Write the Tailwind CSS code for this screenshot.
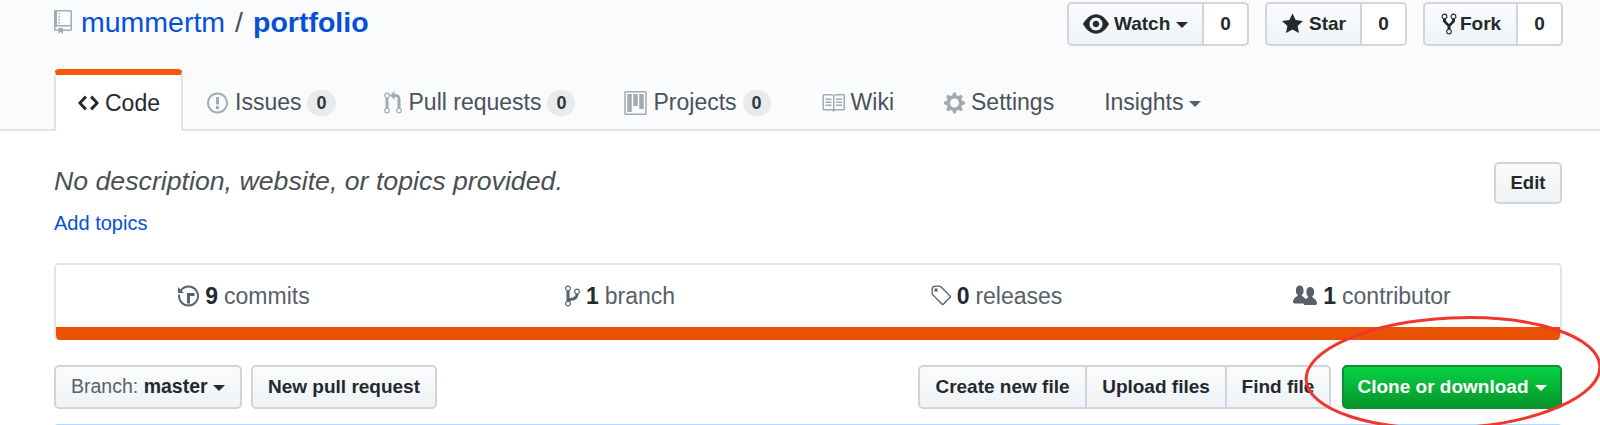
<!DOCTYPE html>
<html lang="en">
<head>
    <meta charset="UTF-8">
    <title>mummertm / portfolio</title>
    <script src="https://cdn.jsdelivr.net/npm/@tailwindcss/browser@4"></script>
</head>
<body class="relative w-[1600px] h-[425px] overflow-hidden bg-white font-['Liberation_Sans',Arial,sans-serif] text-[#24292e]">
    <!-- Repo header -->
    <div class="h-[131px] bg-[#fafbfc] border-b-2 border-[#e1e4e8] pl-[54px] pr-[38px]">
        <div class="flex justify-between h-[69px] items-start">
            <h1 class="flex items-center h-[44px] text-[28.5px] text-[#586069]">
                <svg class="w-[18px] h-[24px] mr-[9px] fill-[#a3aab1]" viewBox="0 0 12 16"><path d="M4 9H3V8h1v1zm0-3H3v1h1V6zm0-2H3v1h1V4zm0-2H3v1h1V2zm8-1v12c0 .55-.45 1-1 1H6v2l-1.5-1.5L3 16v-2H1c-.55 0-1-.45-1-1V1c0-.55.45-1 1-1h10c.55 0 1 .45 1 1zm-1 10H1v2h2v-1h3v1h5v-2zm0-10H2v9h9V1z"/></svg>
                <a class="text-[#0551d6]">mummertm</a>
                <span class="mx-[10px] text-[#4a4f55]">/</span>
                <a class="font-bold text-[#0551d6]">portfolio</a>
            </h1>
            <div class="flex mt-[2px] -mr-px gap-[16px] text-[19px] font-bold">
                <div class="flex h-[44px]">
                    <div class="flex items-center w-[137px] pl-[14px] bg-gradient-to-b from-[#fafbfc] to-[#eff3f6] border-2 border-[#d1d5da] rounded-l-[5px]">
                        <svg class="w-[26px] h-[26px] mr-[5px] fill-[#24292e]" viewBox="0 0 16 16"><path d="M8.06 2C3 2 0 8 0 8s3 6 8.06 6C13 14 16 8 16 8s-3-6-7.94-6zM8 12c-2.2 0-4-1.78-4-4 0-2.2 1.8-4 4-4 2.22 0 4 1.8 4 4 0 2.22-1.78 4-4 4zm2-4c0 1.11-.89 2-2 2-1.11 0-2-.89-2-2 0-1.11.89-2 2-2 1.11 0 2 .89 2 2z"/></svg>
                        Watch
                        <span class="ml-[6px] mt-[2px] border-x-[6px] border-t-[6px] border-x-transparent border-t-[#24292e]"></span>
                    </div>
                    <div class="flex items-center justify-center w-[45px] bg-white border-2 border-l-0 border-[#d1d5da] rounded-r-[5px]">0</div>
                </div>
                <div class="flex h-[44px]">
                    <div class="flex items-center w-[97px] pl-[15px] bg-gradient-to-b from-[#fafbfc] to-[#eff3f6] border-2 border-[#d1d5da] rounded-l-[5px]">
                        <svg class="w-[21px] h-[24px] mr-[6px] fill-[#24292e]" viewBox="0 0 14 16"><path d="M14 6l-4.9-.64L7 1 4.9 5.36 0 6l3.6 3.26L2.67 14 7 11.67 11.33 14l-.93-4.74L14 6z"/></svg>
                        Star
                    </div>
                    <div class="flex items-center justify-center w-[45px] bg-white border-2 border-l-0 border-[#d1d5da] rounded-r-[5px]">0</div>
                </div>
                <div class="flex h-[44px]">
                    <div class="flex items-center w-[95px] pl-[16px] bg-gradient-to-b from-[#fafbfc] to-[#eff3f6] border-2 border-[#d1d5da] rounded-l-[5px]">
                        <svg class="w-[16px] h-[24px] mr-[3px] fill-[#24292e]" viewBox="0 0 10 16"><path d="M8 1a1.993 1.993 0 0 0-1 3.72V6L5 8 3 6V4.72A1.993 1.993 0 0 0 2 1a1.993 1.993 0 0 0-1 3.72V6.5l3 3v1.78A1.993 1.993 0 0 0 5 15a1.993 1.993 0 0 0 1-3.72V9.5l3-3V4.72A1.993 1.993 0 0 0 8 1zM2 4.2C1.34 4.2.8 3.65.8 3c0-.65.55-1.2 1.2-1.2.65 0 1.2.55 1.2 1.2 0 .65-.55 1.2-1.2 1.2zm3 10c-.66 0-1.2-.55-1.2-1.2 0-.65.55-1.2 1.2-1.2.65 0 1.2.55 1.2 1.2 0 .65-.55 1.2-1.2 1.2zm3-10c-.66 0-1.2-.55-1.2-1.2 0-.65.55-1.2 1.2-1.2.65 0 1.2.55 1.2 1.2 0 .65-.55 1.2-1.2 1.2z"/></svg>
                        Fork
                    </div>
                    <div class="flex items-center justify-center w-[45px] bg-white border-2 border-l-0 border-[#d1d5da] rounded-r-[5px]">0</div>
                </div>
            </div>
        </div>
        <!-- Tabs -->
        <nav class="flex h-[62px] text-[23px] text-[#4a525b]">
            <a class="flex items-center h-[62px] w-[129px] pl-[22px] bg-white border-x-2 border-[#e1e4e8] border-t-[6px] border-t-[#f9560d] rounded-t-[5px] text-[#24292e]">
                <svg class="w-[21px] h-[24px] mr-[6px] fill-[#24292e]" viewBox="0 0 14 16"><path d="M9.5 3L8 4.5 11.5 8 8 11.5 9.5 13 14 8 9.5 3zm-5 0L0 8l4.5 5L6 11.5 2.5 8 6 4.5 4.5 3z"/></svg>
                Code
            </a>
            <a class="flex items-center h-[62px] px-[24px] pt-[5px]">
                <svg class="w-[21px] h-[24px] mr-[7px] fill-[#a3aab1]" viewBox="0 0 14 16"><path d="M7 2.3c3.14 0 5.7 2.56 5.7 5.7s-2.56 5.7-5.7 5.7A5.71 5.71 0 0 1 1.3 8c0-3.14 2.56-5.7 5.7-5.7zM7 1C3.14 1 0 4.14 0 8s3.14 7 7 7 7-3.14 7-7-3.14-7-7-7zm1 3H6v5h2V4zm0 6H6v2h2v-2z"/></svg>
                Issues
                <span class="ml-[6px] px-[9px] h-[26px] leading-[26px] rounded-full bg-[#e9eaec] text-[18px] font-bold text-[#2f363d]">0</span>
            </a>
            <a class="flex items-center h-[62px] px-[24px] pt-[5px]">
                <svg class="w-[18px] h-[24px] mr-[7px] fill-[#a3aab1]" viewBox="0 0 12 16"><path d="M11 11.28V5c-.03-.78-.34-1.47-.94-2.06C9.46 2.35 8.78 2.03 8 2H7V0L4 3l3 3V4h1c.27.02.48.11.69.31.21.2.3.42.31.69v6.28A1.993 1.993 0 0 0 10 15a1.993 1.993 0 0 0 1-3.72zm-1 2.92c-.66 0-1.2-.55-1.2-1.2 0-.65.55-1.2 1.2-1.2.65 0 1.2.55 1.2 1.2 0 .65-.55 1.2-1.2 1.2zM4 3c0-1.11-.89-2-2-2a1.993 1.993 0 0 0-1 3.72v6.56A1.993 1.993 0 0 0 2 15a1.993 1.993 0 0 0 1-3.72V4.72c.59-.34 1-.98 1-1.72zm-.8 10c0 .66-.55 1.2-1.2 1.2-.65 0-1.2-.55-1.2-1.2 0-.65.55-1.2 1.2-1.2.65 0 1.2.55 1.2 1.2zM2 4.2C1.34 4.2.8 3.65.8 3c0-.65.55-1.2 1.2-1.2.65 0 1.2.55 1.2 1.2 0 .65-.55 1.2-1.2 1.2z"/></svg>
                Pull requests
                <span class="ml-[6px] px-[9px] h-[26px] leading-[26px] rounded-full bg-[#e9eaec] text-[18px] font-bold text-[#2f363d]">0</span>
            </a>
            <a class="flex items-center h-[62px] px-[25px] pt-[5px]">
                <svg class="w-[23px] h-[24px] mr-[6px] fill-[#a3aab1]" viewBox="0 0 15 16"><path fill-rule="evenodd" d="M10 12h3V2h-3v10zm-4-2h3V2H6v8zm-4 4h3V2H2v12zm-1 1h13V1H1v14zM14 0H1a1 1 0 0 0-1 1v14a1 1 0 0 0 1 1h13a1 1 0 0 0 1-1V1a1 1 0 0 0-1-1z"/></svg>
                Projects
                <span class="ml-[6px] px-[9px] h-[26px] leading-[26px] rounded-full bg-[#e9eaec] text-[18px] font-bold text-[#2f363d]">0</span>
            </a>
            <a class="flex items-center h-[62px] px-[25px] pt-[5px]">
                <svg class="w-[24px] h-[24px] mr-[6px] fill-[#a3aab1]" viewBox="0 0 16 16"><path d="M3 5h4v1H3V5zm0 3h4V7H3v1zm0 2h4V9H3v1zm11-5h-4v1h4V5zm0 2h-4v1h4V7zm0 2h-4v1h4V9zm2-6v9c0 .55-.45 1-1 1H9.5l-1 1-1-1H2c-.55 0-1-.45-1-1V3c0-.55.45-1 1-1h5.5l1 1 1-1H15c.55 0 1 .45 1 1zm-8 .5L7.5 3H2v9h6V3.5zm7-.5H9.5l-.5.5V12h6V3z"/></svg>
                Wiki
            </a>
            <a class="flex items-center h-[62px] px-[25px] pt-[5px]">
                <svg class="w-[21px] h-[24px] mr-[6px] fill-[#a3aab1]" viewBox="0 0 14 16"><path d="M14 8.77v-1.6l-1.94-.64-.45-1.09.88-1.84-1.13-1.13-1.81.91-1.09-.45-.69-1.92h-1.6l-.63 1.94-1.11.45-1.84-.88-1.13 1.13.91 1.81-.45 1.09L0 7.23v1.59l1.94.64.45 1.09-.88 1.84 1.13 1.13 1.81-.91 1.09.45.69 1.92h1.59l.63-1.94 1.11-.45 1.84.88 1.13-1.13-.92-1.81.47-1.09L14 8.75v.02zM7 11c-1.66 0-3-1.34-3-3s1.34-3 3-3 3 1.34 3 3-1.34 3-3 3z"/></svg>
                Settings
            </a>
            <a class="flex items-center h-[62px] px-[25px] pt-[5px]">
                Insights
                <span class="ml-[6px] mt-[2px] border-x-[6px] border-t-[6px] border-x-transparent border-t-[#586069]"></span>
            </a>
        </nav>
    </div>

    <main class="pl-[54px] pr-[38px]">
        <!-- Description -->
        <div class="flex justify-between pt-[31px] h-[132px]">
            <div>
                <p class="text-[26.7px] leading-[38px] italic text-[#4a4f55]">No description, website, or topics provided.</p>
                <a class="block mt-[11px] text-[20px] leading-[24px] text-[#0551d6]">Add topics</a>
            </div>
            <button class="h-[42px] w-[68px] text-[18.5px] font-bold bg-gradient-to-b from-[#fafbfc] to-[#eff3f6] border-2 border-[#d1d5da] rounded-[5px]">Edit</button>
        </div>
        <!-- Summary -->
        <div class="h-[77px] border-2 border-b-0 border-[#e1e4e8] rounded-[5px] overflow-hidden">
            <div class="grid grid-cols-4 h-[62px] text-[23px] text-[#586069]">
                <div class="flex items-center justify-center">
                    <svg class="w-[21px] h-[24px] mr-[6px] fill-[#586069]" viewBox="0 0 14 16"><path d="M8 13H6V6h5v2H8v5zM7 1C4.81 1 2.87 2.02 1.59 3.59L0 2v4h4L2.5 4.5C3.55 3.17 5.17 2.3 7 2.3c3.14 0 5.7 2.56 5.7 5.7s-2.56 5.7-5.7 5.7A5.71 5.71 0 0 1 1.3 8c0-.34.03-.67.09-1H.08C.03 7.33 0 7.66 0 8c0 3.86 3.14 7 7 7s7-3.14 7-7-3.14-7-7-7z"/></svg>
                    <b class="text-[#24292e] mr-[6px]">9</b>commits
                </div>
                <div class="flex items-center justify-center">
                    <svg class="w-[15px] h-[24px] mr-[6px] fill-[#586069]" viewBox="0 0 10 16"><path d="M10 5c0-1.11-.89-2-2-2a1.993 1.993 0 0 0-1 3.72v.3c-.02.52-.23.98-.63 1.38-.4.4-.86.61-1.38.63-.83.02-1.48.16-2 .45V4.72a1.993 1.993 0 0 0-1-3.72C.88 1 0 1.89 0 3a2 2 0 0 0 1 1.72v6.56c-.59.35-1 .99-1 1.72 0 1.11.89 2 2 2 1.11 0 2-.89 2-2 0-.53-.2-1-.53-1.36.09-.06.48-.41.59-.47.25-.11.56-.17.94-.17 1.05-.05 1.95-.45 2.75-1.25S8.95 7.77 9 6.73h-.02C9.59 6.37 10 5.73 10 5zM2 1.8c.66 0 1.2.55 1.2 1.2 0 .65-.55 1.2-1.2 1.2C1.35 4.2.8 3.65.8 3c0-.65.55-1.2 1.2-1.2zm0 12.41c-.66 0-1.2-.55-1.2-1.2 0-.65.55-1.2 1.2-1.2.65 0 1.2.55 1.2 1.2 0 .65-.55 1.2-1.2 1.2zm6-8c-.66 0-1.2-.55-1.2-1.2 0-.65.55-1.2 1.2-1.2.65 0 1.2.55 1.2 1.2 0 .65-.55 1.2-1.2 1.2z"/></svg>
                    <b class="text-[#24292e] mr-[6px]">1</b>branch
                </div>
                <div class="flex items-center justify-center">
                    <svg class="w-[21px] h-[24px] mr-[6px] fill-[#586069]" viewBox="0 0 14 16"><path d="M7.73 1.73C7.26 1.26 6.62 1 5.96 1H3.5C2.13 1 1 2.13 1 3.5v2.47c0 .66.27 1.3.73 1.77l6.06 6.06c.39.39 1.02.39 1.41 0l4.59-4.59a.996.996 0 0 0 0-1.41L7.73 1.73zM2.38 7.09c-.31-.3-.47-.7-.47-1.13V3.5c0-.88.72-1.59 1.59-1.59h2.47c.42 0 .83.16 1.13.47l6.14 6.13-4.73 4.73-6.13-6.15zM3.01 3h2v2H3V3h.01z"/></svg>
                    <b class="text-[#24292e] mr-[6px]">0</b>releases
                </div>
                <div class="flex items-center justify-center">
                    <svg class="w-[24px] h-[24px] mr-[6px] fill-[#586069]" viewBox="0 0 16 16"><path d="M16 12.999c0 .439-.45 1-1 1H7.995c-.539 0-.994-.447-.995-.999H1c-.54 0-1-.561-1-1 0-2.634 3-4 3-4s.229-.409 0-1c-.841-.621-1.058-.59-1-3 .058-2.419 1.367-3 2.5-3s2.442.58 2.5 3c.058 2.41-.159 2.379-1 3-.229.59 0 1 0 1s1.549.711 2.42 2.088C9.196 9.369 10 8.999 10 8.999s.229-.409 0-1c-.841-.62-1.058-.59-1-3 .058-2.419 1.367-3 2.5-3s2.437.581 2.495 3c.059 2.41-.158 2.38-1 3-.229.59 0 1 0 1s3.005 1.366 3.005 4z"/></svg>
                    <b class="text-[#24292e] mr-[6px]">1</b>contributor
                </div>
            </div>
            <div class="h-[13px] bg-[#e95205]"></div>
        </div>
        <!-- File actions -->
        <div class="flex mt-[25px] text-[19px] font-bold h-[44px]">
            <button class="flex items-center w-[188px] pl-[15px] text-[19.5px] font-normal text-[#586069] bg-gradient-to-b from-[#fafbfc] to-[#eff3f6] border-2 border-[#d1d5da] rounded-[5px]">
                Branch:&nbsp;<b class="text-[#24292e]">master</b>
                <span class="ml-[5px] mt-[2px] border-x-[6px] border-t-[6px] border-x-transparent border-t-[#24292e]"></span>
            </button>
            <button class="ml-[9px] w-[186px] bg-gradient-to-b from-[#fafbfc] to-[#eff3f6] border-2 border-[#d1d5da] rounded-[5px]">New pull request</button>
            <div class="flex ml-auto">
                <button class="w-[169px] bg-gradient-to-b from-[#fafbfc] to-[#eff3f6] border-2 border-[#d1d5da] rounded-l-[5px]">Create new file</button>
                <button class="w-[140px] bg-gradient-to-b from-[#fafbfc] to-[#eff3f6] border-2 border-l-0 border-[#d1d5da]">Upload files</button>
                <button class="w-[104px] bg-gradient-to-b from-[#fafbfc] to-[#eff3f6] border-2 border-l-0 border-[#d1d5da] rounded-r-[5px]">Find file</button>
            </div>
            <button class="flex items-center justify-center ml-[11px] w-[220px] text-white bg-gradient-to-b from-[#06d444] to-[#06952b] border-2 border-[#0a8f35] rounded-[5px]">
                Clone or download
                <span class="ml-[6px] mt-[2px] border-x-[6px] border-t-[6px] border-x-transparent border-t-white"></span>
            </button>
        </div>
        <div class="mt-[15px] h-[4px] bg-[#dbedff] border-t-2 border-x-2 border-[#b4d9ff] rounded-t-[5px]"></div>
    </main>

    <!-- Hand-drawn annotation over the button -->
    <svg class="absolute left-0 top-0 pointer-events-none" width="1600" height="425" viewBox="0 0 1600 425" fill="none">
        <ellipse cx="1453" cy="373" rx="147" ry="55" transform="rotate(-2.7 1453 373)" stroke="#f0372e" stroke-width="3"/>
    </svg>
</body>
</html>
